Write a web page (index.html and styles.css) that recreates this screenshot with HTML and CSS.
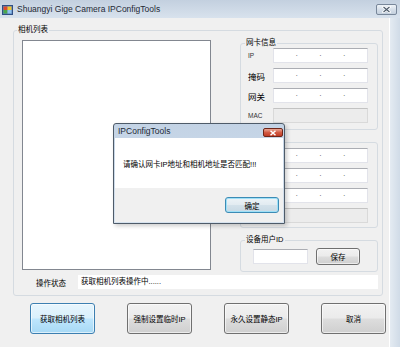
FILE: index.html
```html
<!DOCTYPE html>
<html lang="zh-CN">
<head>
    <meta charset="UTF-8">
    <title>Shuangyi Gige Camera IPConfigTools</title>
    <link rel="stylesheet" href="styles.css">
</head>
<body>
<div class="window">
    <div class="titlebar">
        <svg class="app-icon" width="11" height="11" viewBox="0 0 11 11">
            <rect x="0.5" y="1.5" width="10" height="9" fill="#5b7fb8" stroke="#2f4f86"/>
            <rect x="1.5" y="2.5" width="4" height="3.5" fill="#e04a2c"/>
            <rect x="5.5" y="2.5" width="4" height="3.5" fill="#f2c530"/>
            <rect x="1.5" y="6" width="4" height="3.5" fill="#4aa84a"/>
            <rect x="5.5" y="6" width="4" height="3.5" fill="#8fc3ee"/>
        </svg>
        <span class="title">Shuangyi Gige Camera IPConfigTools</span>
        <div class="close-btn">
            <svg width="9" height="7" viewBox="0 0 9 7">
                <path d="M1.5 1 L7.5 6 M7.5 1 L1.5 6" stroke="#fff" stroke-width="2.6" stroke-linecap="round"/>
                <path d="M1.5 1 L7.5 6 M7.5 1 L1.5 6" stroke="#4a5868" stroke-width="1.1"/>
            </svg>
        </div>
    </div>

    <div class="frame">
        <div class="client">
            <fieldset class="group main-group">
                <legend>相机列表</legend>
                <div class="main-grid">
                    <div class="camera-list"></div>
                    <div class="side">
                        <fieldset class="group info-group nic-group">
                            <legend>网卡信息</legend>
                            <div class="field"><label class="small">IP</label><div class="ip"><span></span><i>.</i><span></span><i>.</i><span></span><i>.</i><span></span></div></div>
                            <div class="field"><label>掩码</label><div class="ip"><span></span><i>.</i><span></span><i>.</i><span></span><i>.</i><span></span></div></div>
                            <div class="field"><label>网关</label><div class="ip"><span></span><i>.</i><span></span><i>.</i><span></span><i>.</i><span></span></div></div>
                            <div class="field"><label class="small">MAC</label><div class="ip disabled"></div></div>
                        </fieldset>
                        <fieldset class="group info-group cam-group">
                            <legend>相机信息</legend>
                            <div class="field"><label class="small">IP</label><div class="ip"><span></span><i>.</i><span></span><i>.</i><span></span><i>.</i><span></span></div></div>
                            <div class="field"><label>掩码</label><div class="ip"><span></span><i>.</i><span></span><i>.</i><span></span><i>.</i><span></span></div></div>
                            <div class="field"><label>网关</label><div class="ip"><span></span><i>.</i><span></span><i>.</i><span></span><i>.</i><span></span></div></div>
                            <div class="field"><label class="small">MAC</label><div class="ip disabled"></div></div>
                        </fieldset>
                        <fieldset class="group info-group user-group">
                            <legend>设备用户ID</legend>
                            <div class="user-row">
                                <div class="textbox user-id"></div>
                                <button class="btn save-btn">保存</button>
                            </div>
                        </fieldset>
                    </div>
                </div>
                <div class="status-row">
                    <span class="status-label">操作状态</span>
                    <div class="textbox status-box">获取相机列表操作中......</div>
                </div>
            </fieldset>

            <div class="actions">
                <button class="btn hot">获取相机列表</button>
                <button class="btn">强制设置临时IP</button>
                <button class="btn">永久设置静态IP</button>
                <button class="btn">取消</button>
            </div>
        </div>
        <div class="frame-side"></div>
    </div>

    <div class="dialog">
        <div class="dialog-title">
            <span>IPConfigTools</span>
            <div class="dialog-close">
                <svg width="8" height="6" viewBox="0 0 8 6">
                    <path d="M1.5 0.8 L6.5 5.2 M6.5 0.8 L1.5 5.2" stroke="#fff" stroke-width="1.5"/>
                </svg>
            </div>
        </div>
        <div class="dialog-body">请确认网卡IP地址和相机地址是否匹配!!!</div>
        <div class="dialog-footer">
            <button class="btn default">确定</button>
        </div>
    </div>
</div>
</body>
</html>
```

FILE: styles.css
```css
* {
    box-sizing: border-box;
}

body {
    margin: 0;
    width: 400px;
    height: 347px;
    overflow: hidden;
    font-family: "Liberation Sans", "Noto Sans CJK SC", sans-serif;
    font-size: 7.5px;
    color: #000;
    background-color: #dae3ed;
}

.window {
    position: relative;
    width: 400px;
    height: 347px;
}

/* title bar */

.titlebar {
    height: 18px;
    display: flex;
    align-items: center;
    padding-left: 2px;
    background: linear-gradient(#c3d0df, #d8e2ed);
}

.app-icon {
    margin-right: 4px;
}

.title {
    flex: 1;
    font-size: 8.5px;
    color: #1e2935;
}

.close-btn {
    width: 21px;
    height: 11px;
    margin-right: 3px;
    border: 1px solid #78879a;
    border-radius: 2px;
    background: linear-gradient(#eef3f8, #d6dfe9 50%, #c4d0de);
    display: flex;
    align-items: center;
    justify-content: center;
}

.frame {
    display: flex;
    height: 329px;
}

.client {
    width: 390px;
    background-color: #f0f0f0;
    border-right: 1px solid #fff;
}

.frame-side {
    flex: 1;
    background: linear-gradient(90deg, #e4ebf2, #d0dbe7);
}

/* group boxes */

.group {
    margin: 0;
    padding: 0;
    min-width: 0;
    border: 1px solid #d5dbe1;
    border-radius: 3px;
}

.group legend {
    padding: 0 1px;
    font-size: 7.5px;
    line-height: 10px;
}

.main-group {
    width: 370px;
    margin: 7px 0 0 13px;
    padding: 0 4px 6px 8px;
}

.main-group > legend {
    margin-left: -5px;
}

.main-grid {
    display: grid;
    grid-template-columns: 189px 138px;
    column-gap: 29px;
    align-items: start;
}

.camera-list {
    margin-top: 5px;
    height: 230px;
    background-color: #fff;
    border: 1px solid #828790;
}

.side {
    display: flex;
    flex-direction: column;
}

.info-group {
    padding: 0 9px 6px 7px;
}

.info-group legend {
    margin-left: -3px;
}

.nic-group {
    margin-top: 3px;
}

.cam-group {
    margin-top: 7px;
    padding-top: 1px;
    padding-bottom: 4px;
}

.user-group {
    margin-top: 7px;
    padding-top: 3px;
}

.field {
    display: flex;
    align-items: center;
    height: 15px;
}

.field + .field {
    margin-top: 5px;
}

.field label {
    width: 25px;
    font-size: 8.5px;
}

.field label.small {
    font-size: 6.5px;
    color: #333;
}

.ip {
    width: 95px;
    height: 15px;
    display: flex;
    align-items: center;
    background-color: #fff;
    border: 1px solid #e2e3ea;
    border-top-color: #abadb3;
}

.ip span {
    flex: 1;
}

.ip i {
    font-style: normal;
    font-size: 7px;
    line-height: 7px;
    height: 7px;
    margin-top: -4px;
    color: #333;
}

.ip.disabled {
    background-color: #ececec;
    border-color: #d9d9d9;
    border-top-color: #c2c2c2;
}

.textbox {
    height: 15px;
    background-color: #fff;
    border: 1px solid #e2e3ea;
    border-top-color: #abadb3;
}

.user-row {
    display: flex;
    align-items: center;
    padding-left: 5px;
}

.user-id {
    width: 55px;
}

/* status */

.status-row {
    display: flex;
    align-items: center;
    margin-top: 3px;
    height: 14px;
}

.status-label {
    width: 42px;
    margin-left: 14px;
}

.status-box {
    flex: none;
    width: 300px;
    height: 14px;
    border: none;
    padding-left: 3px;
    line-height: 14px;
}

/* buttons */

.btn {
    font-family: "Liberation Sans", "Noto Sans CJK SC", sans-serif;
    font-size: 7.5px;
    color: #000;
    padding: 0;
    border: 1px solid #707070;
    border-radius: 3px;
    background: linear-gradient(#f2f2f2, #ebebeb 48%, #dddddd 52%, #cfcfcf);
    box-shadow: inset 0 0 0 1px rgba(255, 255, 255, 0.6);
}

.btn.hot {
    border-color: #3c7fb1;
    background: linear-gradient(#e7f5fd, #d9f0fc 48%, #bee6fd 52%, #a7d9f5);
}

.btn.default {
    border-color: #3c8bb5;
    background: linear-gradient(#edf3f7, #e2ebf1 48%, #d3e1ea 52%, #c8d9e4);
    box-shadow: inset 0 0 0 1px #9ee0f7;
}

.save-btn {
    width: 44px;
    height: 17px;
    margin-left: 8px;
}

.actions {
    display: flex;
    gap: 32px;
    margin-top: 7px;
    padding-left: 30px;
}

.actions .btn {
    width: 65px;
    height: 31px;
}

/* message box */

.dialog {
    position: absolute;
    left: 113px;
    top: 123px;
    width: 172px;
    height: 101px;
    display: flex;
    flex-direction: column;
    padding: 0 1px 1px;
    border: 1px solid #4e5b69;
    border-radius: 3px 3px 0 0;
    background: linear-gradient(#c3d3e5, #d6e2ee);
    box-shadow: 2px 2px 4px rgba(0, 0, 0, 0.2);
}

.dialog-title {
    height: 14px;
    display: flex;
    padding-left: 3px;
}

.dialog-title span {
    flex: 1;
    font-size: 8.5px;
    line-height: 14px;
    color: #1e2935;
}

.dialog-close {
    width: 20px;
    height: 9px;
    margin-top: 4px;
    border: 1px solid #6e2619;
    border-radius: 2px;
    background: linear-gradient(#eaa896, #d25a43 50%, #c03b24);
    display: flex;
    align-items: center;
    justify-content: center;
}

.dialog-body {
    height: 50px;
    display: flex;
    align-items: center;
    padding-left: 8px;
    background-color: #fff;
}

.dialog-footer {
    flex: 1;
    display: flex;
    justify-content: flex-end;
    align-items: flex-start;
    padding: 9px 4px 0 0;
    background-color: #f0f0f0;
}

.dialog-footer .btn {
    width: 54px;
    height: 16px;
}
```
